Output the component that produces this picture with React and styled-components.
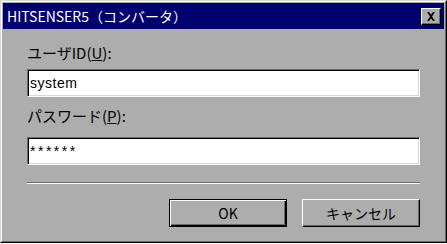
import React from "react";
import styled, { createGlobalStyle } from "styled-components";

const Global = createGlobalStyle`
  html, body {
    margin: 0;
    padding: 0;
    background: #ffffff;
  }
  body {
    font-family: "Noto Sans CJK JP", "Liberation Sans", sans-serif;
  }
`;

const Window = styled.div`
  width: 447px;
  height: 243px;
  box-sizing: border-box;
  background: #adadad;
  border-top: 1px solid #d8d8d8;
  border-left: 1px solid #d8d8d8;
  border-right: 1px solid #000000;
  border-bottom: 1px solid #000000;
  display: flex;
  flex-direction: column;
`;

const Inner = styled.div`
  flex: 1;
  display: flex;
  flex-direction: column;
  border-top: 1px solid #ffffff;
  border-left: 1px solid #ffffff;
  border-right: 1px solid #6b6b6b;
  border-bottom: 1px solid #6b6b6b;
  padding: 1px;
`;

const TitleBar = styled.div`
  height: 26px;
  background: #00006e;
  color: #ffffff;
  display: flex;
  align-items: center;
  justify-content: space-between;
  padding: 0 3px 0 4px;
  font-size: 14px;
  line-height: 16px;
`;

const CloseButton = styled.div`
  width: 20px;
  height: 17px;
  box-sizing: border-box;
  background: #adadad;
  border-top: 1px solid #ffffff;
  border-left: 1px solid #ffffff;
  border-right: 1px solid #000000;
  border-bottom: 1px solid #000000;
  box-shadow: inset -1px -1px 0 #6b6b6b;
  display: flex;
  align-items: center;
  justify-content: center;
`;

const Body = styled.div`
  display: flex;
  flex-direction: column;
  padding: 16px 24px 0 24px;
  font-size: 15px;
  line-height: 16px;
  color: #000000;
`;

const Label = styled.div`
  margin-bottom: ${(p) => p.$gap}px;
  u {
    text-decoration: underline;
  }
`;

const Field = styled.input`
  height: 28px;
  box-sizing: border-box;
  width: 100%;
  margin: 0 0 ${(p) => p.$after}px 0;
  padding: 0 2px;
  background: #ffffff;
  font-family: "Liberation Sans", "Noto Sans CJK JP", sans-serif;
  font-size: 14px;
  letter-spacing: ${(p) => p.$spacing || 0}px;
  color: #000000;
  border-top: 1px solid #6b6b6b;
  border-left: 1px solid #6b6b6b;
  border-right: 1px solid #ffffff;
  border-bottom: 1px solid #ffffff;
  box-shadow: inset 1px 1px 0 #000000, inset -1px -1px 0 #d8d8d8;
  outline: none;
`;

const Separator = styled.div`
  height: 1px;
  background: #6b6b6b;
  border-bottom: 1px solid #ffffff;
  margin-bottom: 15px;
`;

const ButtonRow = styled.div`
  display: flex;
  justify-content: flex-end;
  gap: 15px;
`;

const Button = styled.div`
  width: 118px;
  height: 28px;
  box-sizing: border-box;
  display: flex;
  align-items: center;
  justify-content: center;
  background: #adadad;
  font-size: 14px;
  border-top: 1px solid ${(p) => (p.$default ? "#000000" : "#ffffff")};
  border-left: 1px solid ${(p) => (p.$default ? "#000000" : "#ffffff")};
  border-right: 1px solid #000000;
  border-bottom: 1px solid #000000;
  box-shadow: ${(p) =>
    p.$default
      ? "inset 1px 1px 0 #ffffff, inset -1px -1px 0 #000000, inset -2px -2px 0 #6b6b6b"
      : "inset -1px -1px 0 #6b6b6b"};
`;

const App = () => {
  return (
    <>
      <Global />
      <Window>
        <Inner>
          <TitleBar>
            <span>HITSENSER5（コンバータ）</span>
            <CloseButton>
              <svg width="10" height="9" viewBox="0 0 10 9">
                <path d="M1 0h2l2 2.5L7 0h2L6 4.5 9 9H7L5 6.5 3 9H1l3-4.5z" fill="#000" />
              </svg>
            </CloseButton>
          </TitleBar>
          <Body>
            <Label $gap={8}>
              ユーザID(<u>U</u>):
            </Label>
            <Field readOnly defaultValue="system" $spacing={0.5} $after={11} />
            <Label $gap={13}>
              パスワード(<u>P</u>):
            </Label>
            <Field readOnly defaultValue="******" $spacing={2.5} $after={17} />
            <Separator />
            <ButtonRow>
              <Button $default>OK</Button>
              <Button>キャンセル</Button>
            </ButtonRow>
          </Body>
        </Inner>
      </Window>
    </>
  );
};

export default App;
